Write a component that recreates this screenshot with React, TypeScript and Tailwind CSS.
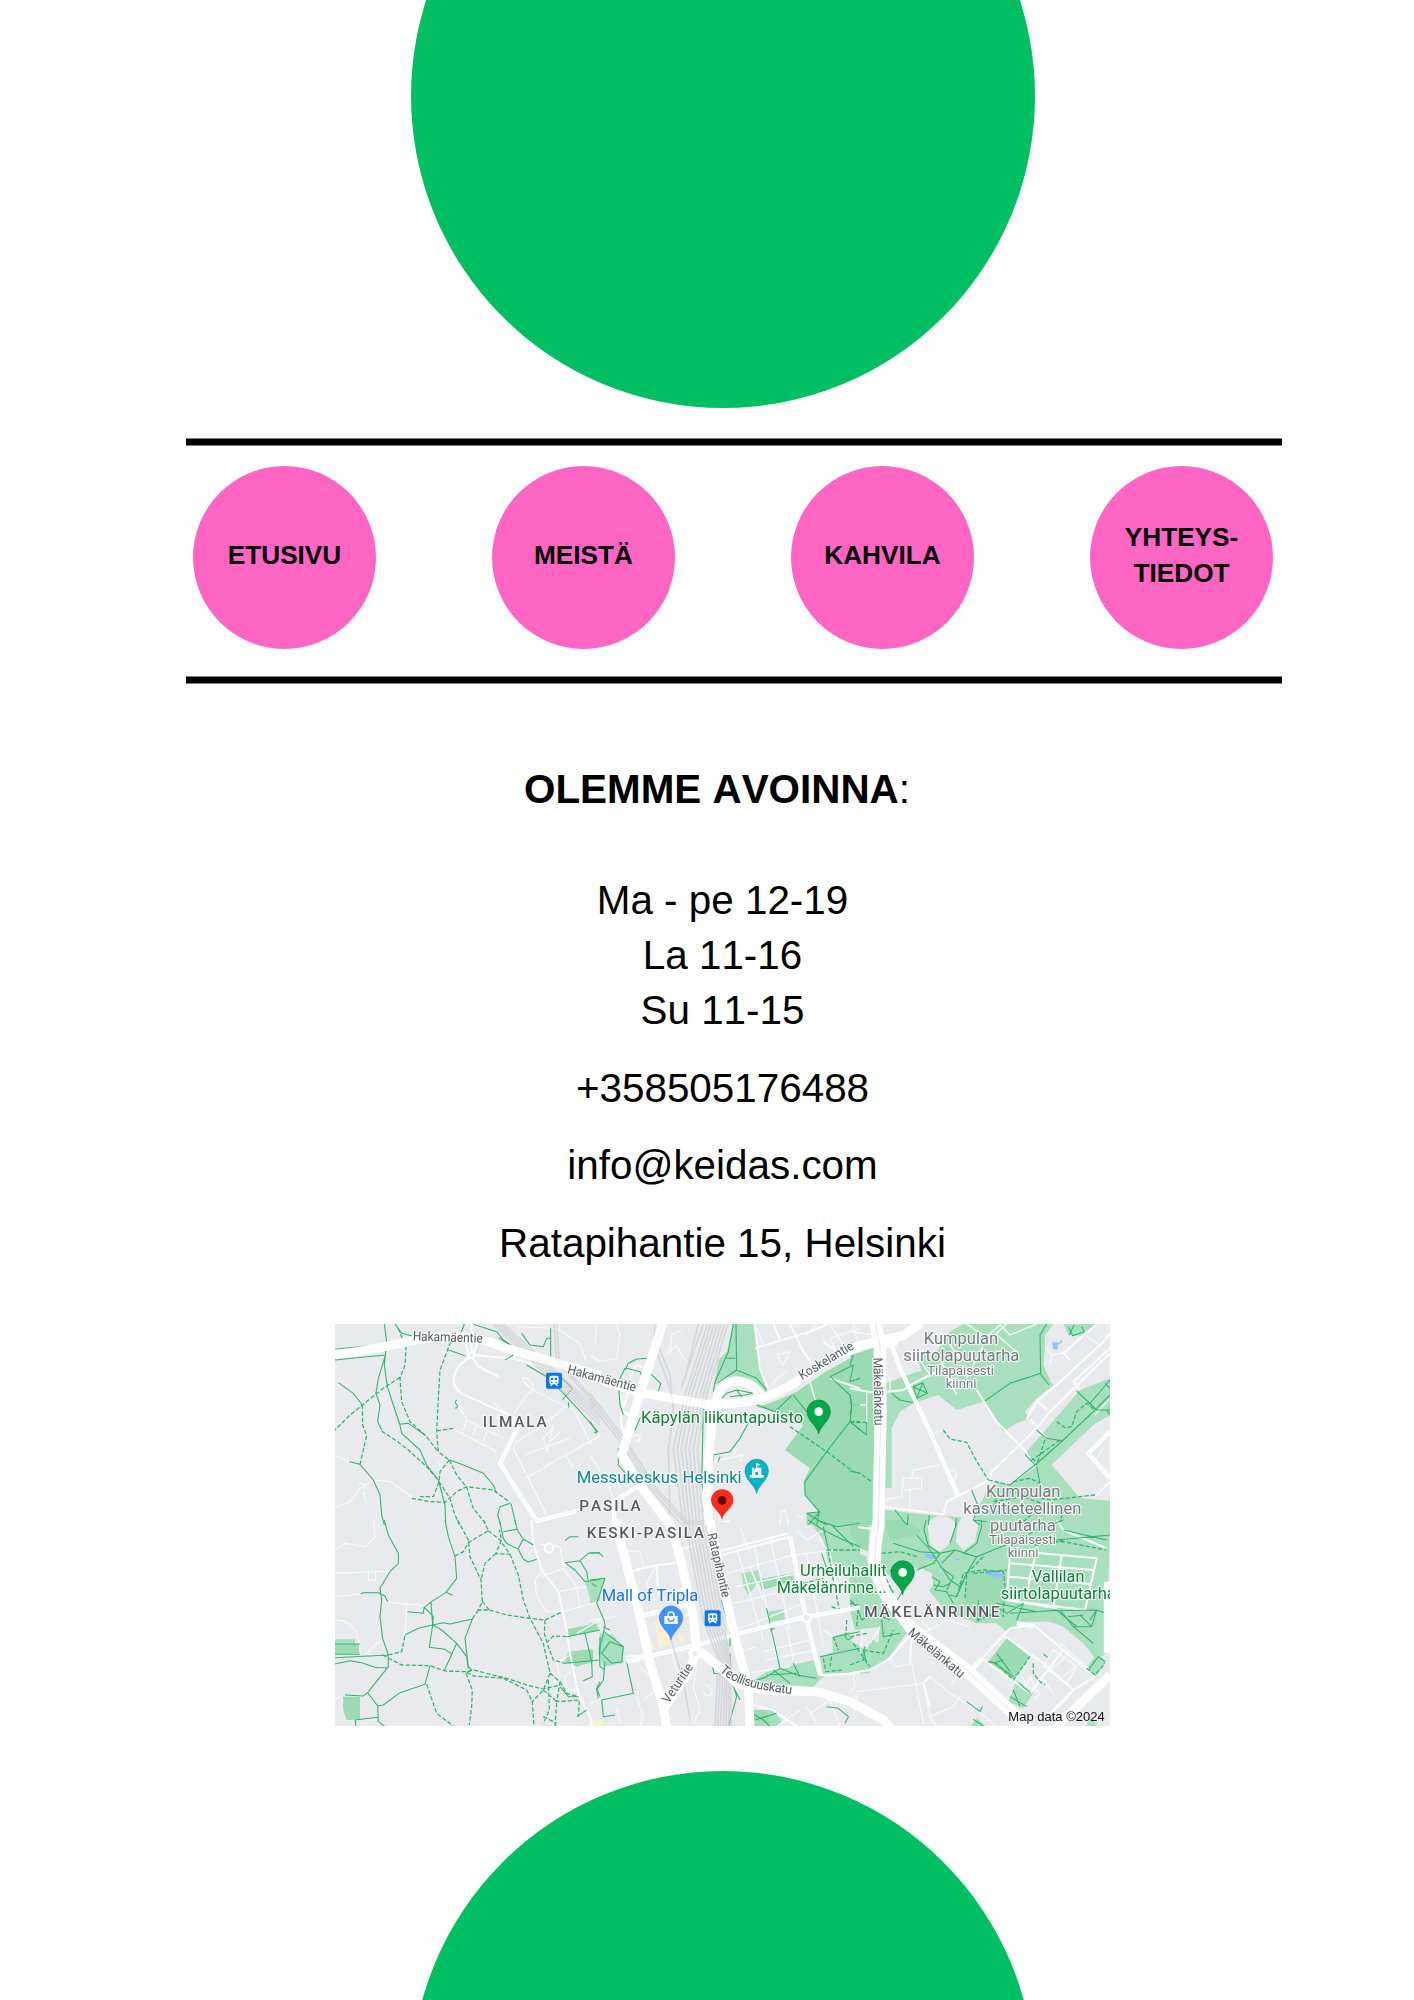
import React from "react";

type Tile = "A" | "B" | "C" | "D" | "E" | "F";
type Layer = Partial<Record<Tile, string>>;

// The map is drawn in six sectors; each sector uses a 3x grid of its own.
const ORIGIN: Record<Tile, string> = {
  A: "translate(330 1315) scale(0.33333)",
  B: "translate(590 1315) scale(0.33333)",
  C: "translate(850 1315) scale(0.33333)",
  D: "translate(330 1520) scale(0.33333)",
  E: "translate(590 1520) scale(0.33333)",
  F: "translate(850 1520) scale(0.33333)",
};

const parkLight: Layer = {
  B: "M430 27L490 27L500 110L535 225L520 240C480 170 420 175 380 200L370 225L385 135L410 110Z",
  C: "M340 27L580 27L610 27L585 60L585 150L610 210L560 250L525 290L540 310L500 325L460 350L400 260L320 285L265 240L190 265L150 290L125 340L125 520L105 520L108 205L200 170L215 170L200 120L260 110L300 50ZM780 190L690 225L530 410L560 455L480 510L440 500L410 530L370 610L240 600L105 585L100 630L810 630L810 560L690 550L605 450L730 330L780 300ZM640 27L740 27L690 62L655 60Z",
  D: "M15 358H75V372H15ZM765 188L810 178V245L785 245Z",
  E: "M0 180L45 175L25 245L0 250ZM0 310H20V330H0ZM30 340L70 345L100 385L100 430L40 440L25 400ZM455 160L505 150L510 180L475 225L460 200ZM535 275L580 268L585 298L540 305ZM485 485L530 455L670 420L685 460L700 470L670 500L500 490ZM485 570L545 570L575 600L570 620L485 620ZM655 0L810 0L810 250L785 250L775 150L715 130L700 60ZM725 350L800 330L840 320V460L700 465L690 410L730 395Z",
  F: "M100 0L780 0L775 180L768 400L740 420L700 370L640 320L600 305L530 305L470 335L440 310L380 310L290 275L240 215L200 140L130 180L80 130ZM0 90L50 110L60 170L100 250L150 300L170 340L110 420L50 455L0 460ZM740 400L770 425L735 470L710 445ZM500 480L550 520L520 565L475 545ZM360 620L380 595L410 620ZM720 590L745 620H710Z",
};

const parkDark: Layer = {
  B: "M500 275L540 265L620 230L700 175L780 130L850 100L850 630L700 630L650 630L650 595L685 590L645 540L640 500L660 460L585 405L640 330L555 290Z",
  C: "M0 120L70 100L75 630L0 630Z",
  D: "M15 372H90V400L15 403ZM38 530H90V600H50L40 570ZM712 328L800 310L805 332L715 350ZM715 395L785 387L790 425L740 440L705 425Z",
  E: "M505 178L608 160L612 182L515 210ZM485 570L530 570L540 610L490 600ZM0 390H10V415H0Z",
  F: "M0 0L60 0L55 95L20 80L0 40ZM350 160L470 150L460 290L385 305L340 270ZM415 425L470 355L540 410L490 480ZM100 0H160L215 30L200 45L120 60Z",
};

const land: Layer = {
  C: "M590 60C600 35 640 30 655 60C665 100 640 110 660 135C680 190 640 215 605 205L580 150ZM105 560L280 590L290 562L365 528L372 560L345 590L280 598L105 575Z",
  F: "M160 225L190 160L215 145L245 160L250 195L235 215L290 275L200 320L150 260ZM232 12Q245 -12 275 -12Q308 -8 318 10L300 70L270 97L240 75ZM322 20Q330 -12 355 -14Q380 -10 386 10L375 65L340 92L318 65ZM15 330L90 320L85 370L65 355L50 390L0 360V270Z",
};

const building: Layer = {
  E: "M195 305L208 300L218 380L205 380ZM210 330L235 340L245 370L222 380ZM165 350L178 350L192 385L170 385ZM265 350L280 350L283 362L268 365ZM0 603L38 600L35 620H0Z",
};

const minor: Layer = {
  A: "M15 578L60 560L90 520L130 495L180 500L245 545L243 570M85 515A10 10 0 1 1 103 522M15 420L58 440M560 35L680 40L750 85L768 140M610 225C560 190 575 170 608 205Q610 215 610 225M610 225L705 275L640 330L560 380L550 400L650 600M640 458L810 362M705 275L730 280L785 390M380 260L410 315L520 370M375 345L500 410M410 315L400 345M440 330L430 360M470 350L460 380M610 225L590 240L550 300M585 420L720 370M650 410L670 330M670 340L640 370L655 415M690 350L660 380M710 425L730 460M585 490L640 460M490 265L540 300M100 530L110 570M320 440L350 470",
  B: "M0 120L30 140L80 130L90 60L80 27M20 27L15 90M240 120L245 60L275 45M225 120L260 90L280 130M0 420L50 500L75 560M130 370A10 10 0 1 1 140 380L150 370M370 440L460 420L450 440M430 420L440 400M570 630L575 590Q585 580 590 600L595 630M395 620L420 618M620 600L640 610M500 40L520 90M560 120L600 110L580 150L560 120M590 170L560 190L545 210M650 60L680 27M740 110L720 70L810 40M720 27L760 90M660 200L680 270M30 590L100 550",
  C: "M0 50L70 60M10 27L20 75M240 360L280 345M105 555L155 545L160 490L215 490L215 520L160 525M185 490L190 465L270 450M180 525V580M300 465Q320 460 318 480Q316 500 305 495M0 270H50M50 232V360M120 190V225M200 120L240 180M270 130L320 240M300 90L330 130M350 27L420 75L470 27M380 90L450 30L480 60L560 27M440 60L500 110M400 90L350 190M585 95L605 120L655 110M605 120L600 150M740 430L760 400M705 60L750 90M735 300L780 250",
  D: "M15 160L180 153M15 230L92 222M15 300C60 300 90 330 90 400M105 403L158 355M160 245L285 258M230 255L225 345M115 160V180H137V158M15 90L45 70L105 80L135 50L130 0M18 545A10 10 0 1 1 35 548M635 155L615 180L620 230L650 275L695 275M635 170L700 145L690 80L670 75M700 145L740 200L750 260M685 215L770 200M695 275L810 245M735 445L705 470L710 510L740 510M670 80L630 72M740 340L810 300M690 470L680 430L720 405M780 550L810 540",
  E: "M90 0L110 20L150 10M100 90L150 95L160 140M200 135L170 190L195 240M265 90L330 70M270 210L300 200M285 290L340 260M150 440L210 500L160 540M320 440L310 500L330 570L310 610M340 490Q370 500 365 520Q350 540 338 510M430 250L600 210L780 190M410 160L610 105L740 90M440 200L600 165L700 150M490 60L560 410M540 50L600 330M440 85L520 360M650 100L700 380M690 60L720 100L740 200M440 330L640 250M520 395L660 360M530 420L680 390M610 420L590 320M620 30L650 60L700 30M440 400L500 380M470 460L600 440M700 330L730 350M480 140L520 240M670 130L690 200M450 20L480 100M0 300L80 290M240 330L250 420L270 480M560 620L630 570M650 560L680 610M660 580L720 540L750 620M140 530L160 590L150 620M80 560L90 610",
  F: "M240 330L290 300L360 320M215 300L240 330L190 345M185 430L140 440L115 420M0 515L15 500L10 460M20 515L220 490M25 520L10 570M185 430L220 610M220 490L240 590L260 620M240 470L300 520L380 570L440 620M240 590L310 560L330 530M610 390L680 440L650 490L580 440ZM590 460L660 400M620 485L690 430M575 470L610 520M630 370L720 450M540 500L570 520L555 540M0 350L40 330L30 400M60 370L90 320M330 455L300 500M450 0L420 30M515 470L540 510M520 510L540 470L555 500",
};

const road: Layer = {
  A: "M425 125C370 150 350 210 400 238L548 305M425 125L445 155L505 185M430 120L555 132L650 158M425 27V120M405 70L415 120M445 75L430 120M555 132L550 110",
  B: "M495 100L560 80L660 50L715 27M495 30L510 160L535 225M600 27L640 110L680 165M550 27L570 75M110 370C70 300 110 280 120 200Q130 130 160 160M130 310L100 290L95 240M720 190L810 220M700 80L740 110",
  C: "M0 220L60 232L110 230L160 225L190 205L260 170M380 225L440 320L530 412M420 495L425 470L560 340L600 290L780 115M530 312L560 260L620 210L760 80L780 55M540 312L590 370M660 135L640 115L740 27M560 255L590 285M690 225L670 200L780 100M735 545L780 500M100 575L280 598L290 560L420 495",
  D: "M605 0L610 70L635 150L685 215L710 330L720 400L745 520L785 600V620",
  E: "M120 155L200 135L255 130M150 285L240 262M200 135L205 230M395 105L600 50M393 92L595 40M490 555L550 570L620 620M690 465L810 460M110 410L160 405",
  F: "M365 445L395 415L500 490L540 520M395 415L480 325L550 315L640 390L735 470M460 345L580 430L670 510M0 460L60 450L120 415L180 345M185 345L180 430M640 390L540 520M670 510L590 590M735 470L670 510L640 545L590 590M240 560L220 490L240 470M480 100L490 92L740 115L705 270L470 240ZM475 170L720 192M560 95L540 170L530 240M635 105L610 262M480 130L730 150M470 240L620 265M620 0L640 30L770 85M25 22L80 28",
};

const mid: Layer = {
  A: "M545 305L562 340L510 445L620 618L740 588M500 305L562 315",
  B: "M372 270C372 180 480 170 518 235M385 262C395 190 475 190 500 240M150 510L70 560L75 630",
  C: "M122 85L150 160L240 350L325 545M780 350L715 415L780 490",
  E: "M110 425L320 375L430 345L640 292L810 262M600 50L648 290L690 465M150 290L310 250",
  F: "M500 310L550 318M365 450L395 415",
};

const major: Layer = {
  A: "M15 118C150 105 240 72 330 65S480 80 530 100L700 150L810 182",
  B: "M0 182L145 232L350 268C480 270 540 250 620 200L720 130L810 95M220 20L150 235L110 370L95 420L150 510L240 630M372 270L358 400L350 550L358 630",
  C: "M0 98L90 78L160 62L215 22",
  E: "M75 0L150 290L180 430L220 560L230 625M235 0L270 110L310 290L320 390M360 0L400 200L440 370L475 500L480 625M315 400L300 450L225 560M330 395L400 450L440 490L520 510L680 515L780 545L880 600L905 630",
  F: "M780 465L640 600L620 625M775 185V400",
};

const avenue: Layer = {
  C: "M75 20L90 90L92 300L85 640",
  F: "M87 0L76 80L75 140L105 220L180 320L350 450L500 590L530 625",
};

const rail: Layer = {
  A: "M495 27L810 318M503 27L810 308M511 27L810 298M520 27L810 288M487 27L810 330M672 27L680 140L810 285M680 27L688 140L810 275",
  B: "M355 20L285 240L250 400L280 630M365 20L295 240L262 400L290 630M375 20L305 240L274 400L300 630M385 20L318 240L286 400L310 630M395 20L330 240L298 400L320 630M405 20L340 240L310 400L330 630M415 20L350 240L322 400L340 630M340 27L275 215M325 27L285 190M0 235L110 380L200 520L300 630M0 250L110 392L190 520L290 630M0 265L100 392L180 520L275 630M195 27C180 130 250 180 250 300L235 400L240 600M215 27L200 80L240 180L250 280",
  E: "M285 0L340 300L385 420L375 620M295 0L350 300L392 420L383 620M305 0L360 300L400 420L391 620M315 0L370 300L407 420L400 620M325 0L380 300L412 420L408 620M335 0L390 300L417 420L416 620M345 0L400 300L420 420L424 620M240 350L280 480L300 600",
};

const solid: Layer = {
  A: "M163 27L170 80L163 150L172 215L190 270L210 330L215 355L270 405L290 450L325 495L345 570L347 625M165 125L145 190L138 235L150 270L143 320L155 345M15 103L140 90M15 135L165 120M25 203L70 235L97 270M208 328L235 325L285 360M58 440L90 448L130 495L150 540L155 600L163 630M195 27L215 55L245 62M403 27L390 60M360 435L400 450L460 475L490 510L500 535M430 28L500 50L520 75L550 95M505 68L540 90M355 105L405 122M590 150L650 185L710 245L760 300L803 350L795 355M690 185L727 220L697 255M575 55L600 90L640 95L650 70L663 70M662 38V130M540 565L510 575L503 600L512 630M543 565L558 630M380 255Q372 262 380 268Q386 278 376 280M525 135L550 120M715 262L717 278",
  B: "M430 27L415 110L375 200L370 230M438 27L440 165L380 205M440 165L500 190L530 225M407 130H437M105 165L115 145L140 132L175 130M105 160L85 200L90 270L100 300M110 160L150 170L165 200M175 170L212 205L205 230M150 310L135 345M395 250L410 235L440 225L490 235L465 240L420 245M440 225L455 245M480 315L450 370L420 410L370 420L368 440M390 425L385 440M340 280L338 370L335 500L345 560L340 590M85 400L85 450L145 520M605 242L555 290L500 270M610 240L650 290M780 320L710 410L645 500L645 540L688 590L680 630M720 185L780 240L785 280L780 320L810 345M785 270H810M720 185L790 150L780 200L810 190M650 595L710 630M650 595L690 590L655 630M0 320L20 350L12 353",
  C: "M590 27L570 60L572 175L480 205L405 258M570 175L597 210M655 35L668 62L703 50L695 35M658 60L672 30M125 235L150 255L190 263M190 215L218 203L232 235L200 250ZM190 215L232 235M218 203L200 250M780 195L720 265M780 240L735 285L640 375L555 450L510 485L480 510M680 228L740 285L780 285M765 205L780 220M770 285L780 300M555 450L525 418M560 455L570 505M560 345L590 370L635 377M0 320L50 360V322M0 85L15 82M0 150L10 120M0 240Q8 275 0 300M135 585L170 630M175 598L172 630M238 600L235 630M320 610L316 630M365 525L385 575L370 615L410 620M370 615L390 630M420 590L440 560L430 530",
  D: "M163 0L175 45L205 100L205 130L180 155L150 205L155 240L150 290L158 355L175 405V440L113 518L143 558L145 605L165 620M345 0L355 50L375 110L380 175L348 217L305 245L283 262L310 290L308 315L265 325L225 345M348 217L368 226M303 245L308 315L298 382L345 388L367 403M282 262L280 280L232 275M308 315L340 308L360 312L427 297L405 355L415 440L425 450L410 457M308 315L335 330L380 370L410 410L415 445M380 370L343 452M92 222L100 218L145 218L165 228L173 245M15 413L175 405M15 432L60 422L95 428L140 443L170 443M113 518L100 528L45 525M143 558L160 555L210 518L285 493L300 437M75 600L143 592M75 600L78 620M508 0L520 55L530 70L565 88L580 118L595 126L620 118M565 85L580 57L562 30L555 0M580 57L610 75M520 35L560 28M705 62L720 50H745M705 128L750 122L775 100L810 98M705 128L735 150L765 185L810 178M750 122L770 155L775 185M710 350L810 330M765 340L785 425M705 430L810 420M785 425L787 470L760 482M15 372H90M15 403H90M800 200L785 190M810 485L800 505L810 530M740 590L770 570M810 350V400M690 500L715 530L745 530",
  E: "M0 98L25 98L40 110M0 180L45 175L20 250L42 300L45 315M45 315L38 350L28 385L30 440L45 450M42 335L100 380L95 425L65 430L35 400L60 365L100 380M110 425L130 520L35 540L40 590L75 585M45 425L40 480L20 510L25 535M60 330L40 320M395 240L405 280L420 320L420 380M420 400L425 480L440 530L415 620M360 410L372 460L395 463M435 510L450 540M530 265L570 445M540 330L555 325M490 485L530 470L570 445L620 465L680 475M550 450L600 490M530 465L620 460M610 430L630 470M485 580L520 600L540 620M495 600L560 580M710 560L745 565L775 590L765 610M655 0L700 30L760 60L810 80M680 0L740 20L810 10M700 20L715 90M725 15L790 80M695 100L715 160M690 410L810 385M735 350L760 345L810 335M790 350Q770 370 765 345",
  F: "M228 0L222 30L235 78L270 100L315 90L380 110L480 70L560 30L640 0M200 45L240 90L300 180L330 200L350 160M393 0L395 20L380 70L340 100L380 110L350 160L320 230L300 225M315 90L275 130M300 70L320 10M245 170L270 185L255 210L290 215L310 250M250 195L280 200L300 190M130 70L210 95L270 100M270 100L250 130L200 150M270 140L310 170L290 210M385 305V240M415 290L440 260L470 280L520 250L500 300M440 250L560 275L620 270L680 320M480 280L600 272L740 270L770 280M630 270L670 320L725 320L740 270M670 320L730 370M690 285L725 320M655 290L700 285M740 270L720 300M715 450L745 410L765 425M425 425L470 455L490 470M440 400L480 455M430 430L460 420M480 530L530 560M490 510L510 560M350 545L390 575L397 560M508 490L542 520M100 200L135 245M120 150L160 210L130 260M90 170L130 215M0 240L20 260L35 300L70 280L120 300M40 390L50 430M95 300L100 350L150 340M580 402L593 412M370 598L400 618M640 30L770 60M620 60L780 45",
};

const dashed: Layer = {
  A: "M205 40L228 100L225 150L210 190L215 260L240 320L285 360L325 410M210 187L160 220L97 270L60 300L15 345M97 270L98 330L110 362L90 448M362 80L330 165L325 250L320 350L325 410L358 435M320 348L370 340M155 348L200 378L235 405L290 455L327 498M358 435L330 470L327 500L310 545H270M358 435L380 480L410 517L430 580L470 630M245 550L300 560L345 562L380 530L410 515L490 525L540 562M327 500L360 550L375 600L388 630M600 110L700 140",
  B: "M600 335L710 410L790 470L810 475M780 320H810",
  C: "M280 345L300 372L350 382L375 430L415 495M415 495L480 510M490 500L540 490L570 505M620 320L645 338L665 335L680 290L710 265L735 285M585 375L560 450M630 375L540 440M545 430L560 440M735 540L600 555L480 530M0 322H50M0 468L30 475L65 500M430 560L520 545L560 560L640 590L630 620M470 600L540 570L600 600M520 620L560 585",
  D: "M175 405L215 395L225 345M158 405L215 435L300 437L345 453L410 455L430 450L530 475L590 495L640 507L690 495M410 457L430 468L520 475L590 510L607 545L612 620M408 460L427 510L425 560L418 615M290 493L320 580L370 618M383 0L415 60L420 110L453 180L457 245L445 270H478L457 245M375 108L400 95L415 68L475 32L460 0M475 32L510 60L540 103L497 101L515 60L508 30M497 101L465 130L453 180M540 103L565 165L580 240L600 295L640 370L660 460M478 270L530 285L600 295L645 300L692 278M645 300L643 340L655 380L670 420L705 430M710 350L670 348L653 365M445 270L427 297M660 460L640 510L607 545M660 460L690 485L680 545L748 540L745 590M640 510L680 545L675 620M655 480L658 570L640 610M690 485L710 520L745 530M640 590L680 610",
  E: "M710 90H810M715 95L730 180L750 280M725 260L760 275M770 300L768 345M730 350L745 390M700 415L708 455L760 450M725 410L720 440M640 190L700 175",
  F: "M95 100L150 95L200 110M60 120L100 160L130 220M320 230L340 160L400 150L460 155L465 200L460 290M370 160L470 150M350 165L345 240M400 110L350 160M480 70L640 65L770 90M0 250L25 255L20 320M0 350L50 340M10 370L60 440M40 390L100 400L130 330M550 430V460L570 485L585 495M415 425L440 430L490 480L540 410M440 60L560 75L640 60M710 445L735 465L765 430M380 300L440 280M0 435L40 420L45 380",
};

const water: Layer = {
  C: "M607 80L628 84L634 73L636 82L622 92L624 104L610 102Z",
  F: "M222 100L262 108L248 118L228 112ZM315 113L333 119L322 123ZM400 158L440 153L465 170L440 177Z",
};

interface StrokeProps {
  data: Layer;
  color: string;
  width: number;
  dash?: string;
  opacity?: number;
}

function Strokes({ data, color, width, dash, opacity }: StrokeProps) {
  return (
    <g fill="none" stroke={color} strokeWidth={width} strokeDasharray={dash} opacity={opacity} strokeLinejoin="round">
      {(Object.keys(data) as Tile[]).map((t) => (
        <path key={t} d={data[t]} transform={ORIGIN[t]} />
      ))}
    </g>
  );
}

function Fills({ data, color }: { data: Layer; color: string }) {
  return (
    <g fill={color}>
      {(Object.keys(data) as Tile[]).map((t) => (
        <path key={t} d={data[t]} transform={ORIGIN[t]} />
      ))}
    </g>
  );
}

interface LabelSpec {
  t: Tile;
  x: number;
  y: number;
  len: number;
  text: string;
  size: number;
  color: string;
  rot?: number;
  district?: boolean;
}

const GREY = "#565b60";
const SOFT = "#757a7f";
const GREEN = "#128038";

const labels: LabelSpec[] = [
  { t: "A", x: 248, y: 76, len: 210, text: "Hakamäentie", size: 39, color: GREY, rot: 2 },
  { t: "B", x: -70, y: 175, len: 212, text: "Hakamäentie", size: 39, color: GREY, rot: 15 },
  { t: "A", x: 458, y: 335, len: 192, text: "ILMALA", size: 46, color: GREY, district: true },
  { t: "B", x: 153, y: 325, len: 487, text: "Käpylän liikuntapuisto", size: 50, color: GREEN },
  { t: "B", x: -40, y: 503, len: 495, text: "Messukeskus Helsinki", size: 50, color: "#12858d" },
  { t: "B", x: -32, y: 588, len: 184, text: "PASILA", size: 46, color: GREY, district: true },
  { t: "E", x: -10, y: 54, len: 352, text: "KESKI-PASILA", size: 46, color: GREY, district: true },
  { t: "E", x: 35, y: 242, len: 290, text: "Mall of Tripla", size: 50, color: "#1a73e8" },
  { t: "B", x: 636, y: 195, len: 184, text: "Koskelantie", size: 39, color: GREY, rot: -31 },
  { t: "C", x: 70, y: 128, len: 204, text: "Mäkelänkatu", size: 39, color: GREY, rot: 89 },
  { t: "E", x: 352, y: 42, len: 197, text: "Ratapihantie", size: 39, color: GREY, rot: 77 },
  { t: "E", x: 236, y: 552, len: 134, text: "Veturitie", size: 39, color: GREY, rot: -56 },
  { t: "F", x: 172, y: 342, len: 208, text: "Mäkelänkatu", size: 39, color: GREY, rot: 40 },
  { t: "C", x: 221, y: 88, len: 223, text: "Kumpulan", size: 52, color: SOFT },
  { t: "C", x: 160, y: 138, len: 348, text: "siirtolapuutarha", size: 52, color: SOFT },
  { t: "C", x: 232, y: 180, len: 200, text: "Tilapäisesti", size: 40, color: SOFT },
  { t: "C", x: 287, y: 219, len: 92, text: "kiinni", size: 40, color: SOFT },
  { t: "C", x: 408, y: 545, len: 223, text: "Kumpulan", size: 52, color: SOFT },
  { t: "C", x: 340, y: 596, len: 354, text: "kasvitieteellinen", size: 52, color: SOFT },
  { t: "F", x: 420, y: 32, len: 197, text: "puutarha", size: 52, color: SOFT },
  { t: "F", x: 418, y: 73, len: 200, text: "Tilapäisesti", size: 40, color: SOFT },
  { t: "F", x: 473, y: 111, len: 92, text: "kiinni", size: 40, color: SOFT },
  { t: "F", x: 545, y: 185, len: 158, text: "Vallilan", size: 50, color: GREEN },
  { t: "F", x: 452, y: 236, len: 345, text: "siirtolapuutarha", size: 50, color: GREEN },
  { t: "F", x: -150, y: 168, len: 260, text: "Urheiluhallit", size: 50, color: GREEN },
  { t: "F", x: -220, y: 219, len: 330, text: "Mäkelänrinne...", size: 50, color: GREEN },
  { t: "F", x: 43, y: 291, len: 406, text: "MÄKELÄNRINNE", size: 46, color: GREY, district: true },
];

function MapLabel({ t, x, y, len, text, size, color, rot = 0, district = false }: LabelSpec) {
  return (
    <g transform={ORIGIN[t]}>
      <text
        transform={`translate(${x} ${y}) rotate(${rot})`}
        textLength={len}
        lengthAdjust={district ? "spacing" : "spacingAndGlyphs"}
        fontSize={size}
        fontWeight={district ? 500 : 400}
        fill={color}
        stroke="#f6f8f8"
        strokeWidth={7}
        strokeLinejoin="round"
        paintOrder="stroke"
      >
        {text}
      </text>
    </g>
  );
}

interface PinProps {
  t: Tile;
  x: number;
  y: number;
  fill: string;
  edge: string;
  children: React.ReactNode;
}

function Pin({ t, x, y, fill, edge, children }: PinProps) {
  return (
    <g transform={ORIGIN[t]}>
      <g transform={`translate(${x} ${y})`}>
        <path
          d="M0 67C-4 42 -35 28 -35 0A35 35 0 0 1 35 0C35 28 4 42 0 67Z"
          fill={fill}
          stroke={edge}
          strokeWidth="2"
        />
        {children}
      </g>
    </g>
  );
}

function Station({ t, x, y }: { t: Tile; x: number; y: number }) {
  return (
    <g transform={ORIGIN[t]}>
      <g transform={`translate(${x} ${y})`}>
        <rect x="-24" y="-24" width="48" height="48" rx="6" fill="#0b75ee" />
        <path
          fill="#fff"
          fillRule="evenodd"
          d="M-14 -8Q-14 -15 -6 -15H6Q14 -15 14 -8V5Q14 10 9 10L13 15H7L3 11H-3L-7 15H-13L-9 10Q-14 10 -14 5ZM-9 -9V-2H-2V-9ZM2 -9V-2H9V-9ZM-9 3V7H-5V3ZM5 3V7H9V3Z"
        />
      </g>
    </g>
  );
}

function LocationMap() {
  return (
    <svg
      viewBox="335 1324 775 402"
      width="775"
      height="402"
      className="block bg-[#e8eaed] font-['Roboto',sans-serif]"
      role="img"
      aria-label="Ratapihantie 15, Helsinki"
    >
      <Fills data={parkLight} color="#a8e0bd" />
      <Fills data={parkDark} color="#9adbb2" />
      <Fills data={land} color="#e8eaed" />
      <Fills data={building} color="#fdf1cf" />
      <Fills data={water} color="#90c2f9" />
      <Strokes data={minor} color="#f7f8f9" width={4} />
      <Strokes data={road} color="#fbfcfc" width={6} />
      <Strokes data={solid} color="#34b36f" width={3.2} />
      <Strokes data={dashed} color="#34b36f" width={3.8} dash="13 6" />
      <Strokes data={mid} color="#ffffff" width={13} />
      <Strokes data={mid} color="#eef0f2" width={2} />
      <Strokes data={rail} color="#d3d6d9" width={5} opacity={0.8} />
      <Strokes data={major} color="#ffffff" width={27} />
      <Strokes data={avenue} color="#ffffff" width={36} />
      <Strokes data={avenue} color="#e3e6e9" width={3} />
      <Strokes data={rail} color="#cfd2d6" width={2} opacity={0.4} />
      <g transform={ORIGIN.D}>
        <circle cx="657" cy="84" r="13" fill="#e8eaed" stroke="#fff" strokeWidth="6" />
      </g>
      <g transform={ORIGIN.E} fill="#e8eaed" stroke="#fff" strokeWidth="12">
        <circle cx="315" cy="400" r="14" />
        <circle cx="650" cy="293" r="12" strokeWidth="6" />
      </g>
      <g transform={ORIGIN.A} fill="#e8eaed" stroke="#fff" strokeWidth="7">
        <circle cx="425" cy="120" r="9" />
      </g>
      <g transform={ORIGIN.C} fill="#e8eaed" stroke="#fff" strokeWidth="20">
        <circle cx="122" cy="78" r="12" />
      </g>
      {labels.map((l, i) => (
        <MapLabel key={i} {...l} />
      ))}
      <g transform={ORIGIN.E}>
        <path id="teollisuus" d="M388 452C425 492 490 508 615 524" fill="none" />
        <text fontSize="39" fill={GREY} stroke="#f6f8f8" strokeWidth="7" strokeLinejoin="round" paintOrder="stroke">
          <textPath href="#teollisuus" textLength="232">
            Teollisuuskatu
          </textPath>
        </text>
      </g>
      <Station t="A" x={672} y={197} />
      <Station t="E" x={368} y={295} />
      <Pin t="B" x={686} y={290} fill="#04a84b" edge="#07873f">
        <circle r="13" fill="#fff" />
      </Pin>
      <Pin t="F" x={158} y={157} fill="#04a84b" edge="#07873f">
        <circle r="13" fill="#fff" />
      </Pin>
      <Pin t="B" x={500} y={468} fill="#00b3c6" edge="#0a94a5">
        <path
          d="M-2 -24L12 -19L2 -14V-10H14V12H21V20H-21V12H-14V-10H-8V-5H-4V-10H-2ZM-4 12H4V3H-4Z"
          fill="#fff"
          fillRule="evenodd"
        />
      </Pin>
      <Pin t="E" x={243} y={293} fill="#4093fb" edge="#3a86ec">
        <path d="M-20 -5H20V19H-20Z" fill="#fff" />
        <path d="M-9 -5V-8A9 9 0 0 1 9 -8V-5" fill="none" stroke="#fff" strokeWidth="4" />
        <path d="M-9 2A9 9 0 0 0 9 2" fill="none" stroke="#4093fb" strokeWidth="4" />
      </Pin>
      <g transform={ORIGIN.B}>
        <path
          d="M396 615C393 590 363 580 363 556A33 33 0 0 1 430 556C430 580 400 590 396 615Z"
          fill="#ff2a20"
        />
        <circle cx="396" cy="556" r="13" fill="#5e0b0b" />
      </g>
      <g transform={ORIGIN.F}>
        <text
          x="475"
          y="604"
          textLength="289"
          lengthAdjust="spacingAndGlyphs"
          fontSize="39"
          fill="#111"
          fontFamily="Liberation Sans, sans-serif"
        >
          Map data ©2024
        </text>
      </g>
    </svg>
  );
}

const navItems = [["ETUSIVU"], ["MEISTÄ"], ["KAHVILA"], ["YHTEYS-", "TIEDOT"]];

function Rule() {
  return <div className="h-2 border-y border-[#7f7f7f] bg-black" />;
}

export default function App() {
  return (
    <div className="h-[2000px] w-[1414px] overflow-hidden bg-white font-['Liberation_Sans',Arial,sans-serif] text-black [font-kerning:none]">
      <header className="flex h-[408px] items-end justify-center overflow-hidden pl-[31px]">
        <div className="size-[624px] shrink-0 rounded-full bg-[#00bf63]" />
      </header>

      <nav className="mt-[30px] ml-[186px] w-[1096px]">
        <Rule />
        <ul className="flex justify-between pt-5 pr-[9px] pb-[27px] pl-[7px]">
          {navItems.map((lines) => (
            <li
              key={lines[0]}
              className="flex size-[183px] flex-col items-center justify-center rounded-full bg-[#ff66c4] pb-[5px] text-[26.2px] leading-9 font-bold"
            >
              {lines.map((line) => (
                <span key={line}>{line}</span>
              ))}
            </li>
          ))}
        </ul>
        <Rule />
      </nav>

      <main className="flex flex-col items-center pl-[31px] text-[40.4px] leading-[55px]">
        <h1 className="mt-[78px] pr-[11px]">
          <span className="font-bold">OLEMME AVOINNA</span>:
        </h1>
        <div className="mt-[56px] text-center">
          <p>Ma - pe 12-19</p>
          <p>La 11-16</p>
          <p>Su 11-15</p>
        </div>
        <p className="mt-[23px]">+358505176488</p>
        <p className="mt-[22px]">info@keidas.com</p>
        <p className="mt-[23px]">Ratapihantie 15, Helsinki</p>
        <div className="mt-[53px]">
          <LocationMap />
        </div>
      </main>

      <footer className="mt-[45px] flex h-[229px] items-start justify-center overflow-hidden pl-[31px]">
        <div className="size-[624px] shrink-0 rounded-full bg-[#00bf63]" />
      </footer>
    </div>
  );
}
